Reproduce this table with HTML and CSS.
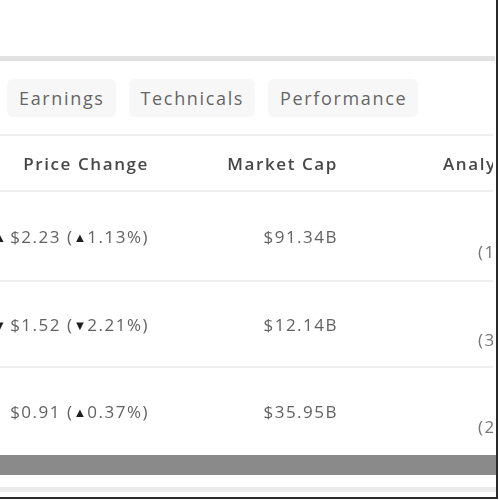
FILE: index.html
```html
<!DOCTYPE html>
<html>
<head>
<meta charset="utf-8">
<link rel="stylesheet" href="styles.css">
</head>
<body>
<div class="frame">
  <div class="top"></div>
  <div class="rule-thick"></div>
  <nav class="tabs">
    <span class="tab">Earnings</span>
    <span class="tab">Technicals</span>
    <span class="tab">Performance</span>
  </nav>
  <div class="table">
    <div class="row head">
      <div class="c-prev"></div>
      <div class="c-price">Price Change</div>
      <div class="c-cap">Market Cap</div>
      <div class="c-an">Analyst Rating</div>
    </div>
    <div class="row r1">
      <div class="c-prev">$196.89 <span class="tri">▲</span></div>
      <div class="c-price">$2.23 (<span class="tri">▲</span>1.13%)</div>
      <div class="c-cap">$91.34B</div>
      <div class="c-an"><span class="sub">(12 ratings)</span></div>
    </div>
    <div class="row r2">
      <div class="c-prev">$67.40 <span class="tri">▼</span></div>
      <div class="c-price">$1.52 (<span class="tri">▼</span>2.21%)</div>
      <div class="c-cap">$12.14B</div>
      <div class="c-an"><span class="sub">(35 ratings)</span></div>
    </div>
    <div class="row r3">
      <div class="c-prev"></div>
      <div class="c-price">$0.91 (<span class="tri">▲</span>0.37%)</div>
      <div class="c-cap">$35.95B</div>
      <div class="c-an"><span class="sub">(24 ratings)</span></div>
    </div>
  </div>
  <div class="scroll"><div class="thumb"></div></div>
  <div class="rule-bottom"></div>
</div>
</body>
</html>
```

FILE: styles.css
```css
html, body {
  margin: 0;
  padding: 0;
  background: #fff;
}
body {
  font-family: "Open Sans", "Liberation Sans", sans-serif;
  color: #626262;
}
.frame {
  width: 496px;
  height: 497px;
  border-right: 2px solid #2a2a2a;
  border-bottom: 2px solid #2a2a2a;
  display: flex;
  flex-direction: column;
  overflow: hidden;
  filter: blur(0.6px);
}
.top {
  height: 56px;
  flex: none;
}
.rule-thick {
  height: 5px;
  background: #e2e2e2;
  width: 495px;
  flex: none;
}
.tabs {
  display: flex;
  gap: 13px;
  padding: 18px 0 0 7px;
  height: 75px;
  box-sizing: border-box;
  border-bottom: 2px solid #efefef;
  width: 493px;
  flex: none;
}
.tab {
  height: 38px;
  line-height: 38px;
  padding: 0 11px 0 12px;
  background: #f7f7f7;
  border-radius: 6px;
  font-size: 18px;
  letter-spacing: 1.65px;
  color: #666;
}
.table {
  width: 493px;
  overflow: hidden;
  flex: none;
}
.row {
  display: flex;
  border-bottom: 2px solid #f0f0f0;
  box-sizing: border-box;
  white-space: nowrap;
}
.head {
  height: 56px;
  align-items: center;
  font-weight: 600;
  color: #474747;
  font-size: 17px;
  letter-spacing: 1.6px;
}
.r1 { height: 90px; }
.r2 { height: 86px; }
.r3 { height: 86px; border-bottom: none; }
.r1, .r2, .r3 {
  font-size: 17px;
  letter-spacing: 1.5px;
  align-items: center;
}
.c-prev {
  width: 80px;
  margin-left: -74px;
  text-align: right;
  flex: none;
  letter-spacing: 0;
}
.c-prev .tri {
  letter-spacing: 0;
}
.c-price {
  width: 143px;
  text-align: right;
  flex: none;
}
.c-cap {
  width: 189px;
  text-align: right;
  flex: none;
}
.c-an {
  padding-left: 105px;
  flex: none;
}
.r1 .c-an, .r2 .c-an, .r3 .c-an {
  padding-left: 140px;
  padding-top: 30px;
}
.tri {
  font-size: 13px;
  color: #1e1e1e;
  letter-spacing: 1px;
  vertical-align: 1px;
}
.sub {
  color: #777;
}
.scroll {
  flex: none;
  margin-top: 1px;
  height: 20px;
  background: #8a8a8a;
}
.rule-bottom {
  flex: none;
  margin-top: 12px;
  height: 5px;
  background: #ececec;
}
```
